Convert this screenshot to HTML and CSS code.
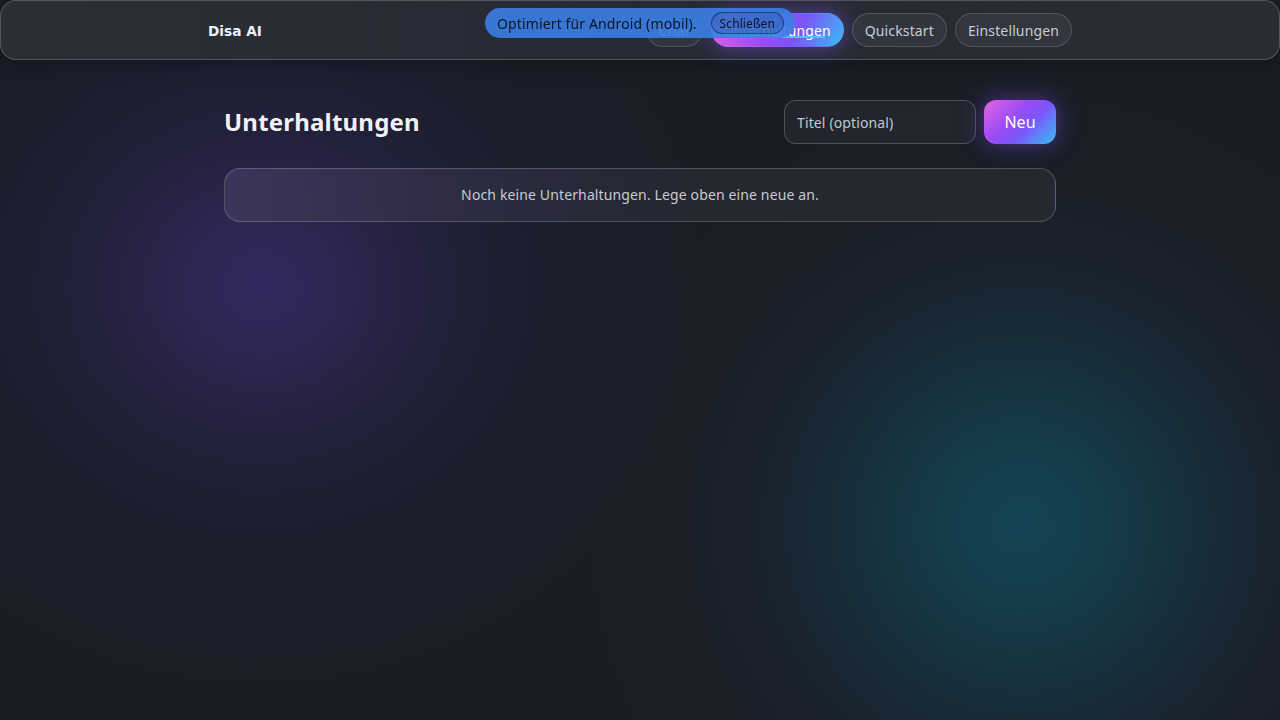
FILE: index.html
```html
<!DOCTYPE html>
<html lang="de">
<head>
<meta charset="utf-8">
<title>Disa AI</title>
<link rel="stylesheet" href="styles.css">
</head>
<body>
<header class="topbar">
  <div class="topbar-inner">
    <div class="brand">Disa AI</div>
    <nav class="nav">
      <a class="nav-btn">Chat</a>
      <a class="nav-btn active">Unterhaltungen</a>
      <a class="nav-btn">Quickstart</a>
      <a class="nav-btn">Einstellungen</a>
    </nav>
  </div>
</header>
<div class="toast">
  <span class="toast-text">Optimiert für Android (mobil).</span>
  <button class="toast-close">Schließen</button>
</div>
<main class="main">
  <div class="head-row">
    <h1 class="title">Unterhaltungen</h1>
    <div class="new-form">
      <input class="title-input" type="text" placeholder="Titel (optional)">
      <button class="new-btn">Neu</button>
    </div>
  </div>
  <div class="empty-card">Noch keine Unterhaltungen. Lege oben eine neue an.</div>
</main>
</body>
</html>
```

FILE: styles.css
```css
* { box-sizing: border-box; }
html, body { height: 100%; }
body {
  margin: 0;
  font-family: "Noto Sans", "Open Sans", sans-serif;
  letter-spacing: 0.13px;
  color: #e8eaf0;
  background-color: #1a1d26;
  background-image:
    radial-gradient(circle 430px at 1022px 525px, rgba(19, 68, 84, 1) 0%, rgba(19, 66, 80, 0.85) 18%, rgba(20, 60, 74, 0.6) 38%, rgba(22, 48, 60, 0.32) 60%, rgba(24, 36, 46, 0.12) 80%, rgba(26, 29, 38, 0) 100%),
    radial-gradient(ellipse 440px 400px at 262px 285px, rgba(50, 40, 95, 1) 0%, rgba(48, 40, 90, 0.82) 18%, rgba(42, 36, 78, 0.55) 38%, rgba(34, 32, 62, 0.3) 60%, rgba(28, 30, 48, 0.12) 80%, rgba(26, 29, 38, 0) 100%);
  min-height: 720px;
}
.topbar {
  height: 60px;
  border: 1px solid rgba(255, 255, 255, 0.2);
  border-radius: 16px;
  background: linear-gradient(90deg, rgba(44, 47, 56, 0.97), rgba(40, 42, 52, 0.97) 50%, rgba(42, 45, 52, 0.97));
  box-shadow: 0 4px 20px rgba(0, 0, 0, 0.25);
}
.topbar-inner {
  max-width: 864px;
  margin: 0 auto;
  height: 100%;
  display: flex;
  align-items: center;
  justify-content: space-between;
}
.brand {
  font-family: "DejaVu Sans", sans-serif;
  font-weight: bold;
  font-size: 13.7px;
  letter-spacing: 0;
  color: #eef0f4;
  padding-top: 1px;
}
.nav {
  display: flex;
  gap: 8px;
  align-items: center;
}
.nav-btn {
  position: relative;
  display: inline-flex;
  align-items: center;
  height: 34px;
  padding: 0 12px;
  border: 1px solid rgba(255, 255, 255, 0.16);
  border-radius: 17px;
  background: rgba(255, 255, 255, 0.05);
  font-size: 14px;
  color: #c9ccd6;
  cursor: pointer;
}
.nav-btn.active {
  color: #ffffff;
  border-color: transparent;
  background: linear-gradient(120deg, #e066e0 0%, #9a4cf6 45%, #7b55f8 65%, #38bdf5 100%);
  box-shadow: 0 0 22px rgba(130, 80, 250, 0.55);
}
.nav-btn.active::after {
  content: "";
  position: absolute;
  left: 17px;
  right: 18px;
  bottom: 8px;
  height: 2px;
  border-radius: 1px;
  background: #4cc4f6;
}
.toast {
  position: fixed;
  top: 8px;
  left: 485px;
  width: 310px;
  height: 30px;
  display: flex;
  align-items: center;
  justify-content: space-between;
  padding: 0 11px 0 12px;
  border-radius: 15px;
  background: rgba(59, 126, 228, 0.9);
  color: #0d1526;
  font-size: 14px;
}
.toast-close {
  font-family: "Noto Sans", sans-serif;
  font-size: 12px;
  letter-spacing: 0.1px;
  color: #0d1526;
  height: 22px;
  padding: 0 8px;
  border: 1px solid rgba(10, 20, 50, 0.45);
  border-radius: 11px;
  background: rgba(20, 40, 90, 0.18);
}
.main {
  max-width: 832px;
  margin: 0 auto;
  padding-top: 40px;
}
.head-row {
  display: flex;
  align-items: center;
  justify-content: space-between;
  height: 44px;
}
.title {
  margin: 0 0 2px;
  font-size: 24px;
  font-weight: 700;
  letter-spacing: 0.2px;
  color: #eff1f6;
}
.new-form {
  display: flex;
  gap: 8px;
}
.title-input {
  width: 192px;
  height: 44px;
  padding: 0 12px;
  border: 1px solid rgba(255, 255, 255, 0.2);
  border-radius: 12px;
  background: rgba(255, 255, 255, 0.04);
  font-family: "Noto Sans", sans-serif;
  font-size: 14px;
  letter-spacing: 0.13px;
  color: #e8eaf0;
  outline: none;
}
.title-input::placeholder { color: #c2c5ce; }
.new-btn {
  width: 72px;
  height: 44px;
  border: none;
  border-radius: 12px;
  background: linear-gradient(135deg, #e066e0 0%, #9a4cf6 40%, #7b55f8 60%, #36c0f5 100%);
  box-shadow: 0 0 22px rgba(130, 80, 250, 0.5);
  font-family: "Noto Sans", sans-serif;
  font-size: 16px;
  color: #ffffff;
}
.empty-card {
  margin-top: 24px;
  height: 54px;
  display: flex;
  align-items: center;
  justify-content: center;
  padding-bottom: 2px;
  border: 1px solid rgba(255, 255, 255, 0.2);
  border-radius: 16px;
  background: linear-gradient(90deg, rgba(62, 54, 92, 0.95) 0%, rgba(48, 46, 70, 0.9) 25%, rgba(38, 40, 50, 0.92) 55%, rgba(38, 41, 50, 0.92) 100%);
  font-size: 14px;
  color: #c7cad4;
}
```
